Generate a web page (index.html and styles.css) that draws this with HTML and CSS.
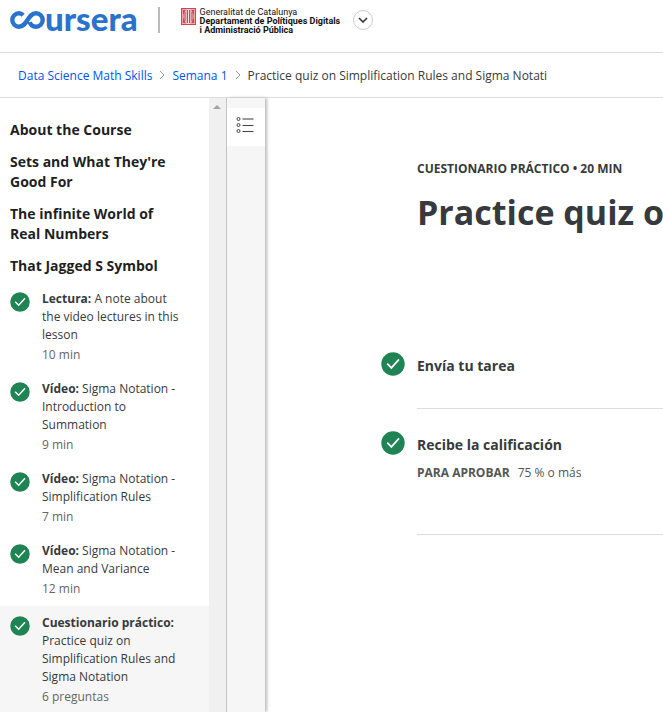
FILE: index.html
```html
<!DOCTYPE html>
<html lang="es">
<head>
<meta charset="utf-8">
<title>Practice quiz on Simplification Rules and Sigma Notation</title>
<link rel="stylesheet" href="styles.css">
</head>
<body>
<svg class="defs" aria-hidden="true">
  <symbol id="check" viewBox="0 0 24 24">
    <circle cx="12" cy="12" r="11.7" fill="#1f8354"/>
    <path d="M6.2 11.6l4.2 4.3 7.6-8.5" fill="none" stroke="#fff" stroke-width="1.7"/>
  </symbol>
  <symbol id="chevron" viewBox="0 0 6 10">
    <path d="M1 1l4 4-4 4" fill="none" stroke="#999" stroke-width="1"/>
  </symbol>
</svg>
<header class="topbar">
  <a class="brand" href="#" aria-label="coursera">
    <svg class="brand-mark" viewBox="0 0 35 20" aria-hidden="true">
      <path d="M13.200 5.200C12 4 10.600 3.300 9 3.300a6.700 6.700 0 0 0 0 13.400c8.500 0 8.500-13.400 17-13.400a6.700 6.700 0 0 1 0 13.400c-3.200 0-5.500-1.800-6.300-4.500" fill="none" stroke="#2a73cc" stroke-width="4.400"/>
    </svg>
    <span>ursera</span>
  </a>
  <div class="partner">
    <svg class="crest" viewBox="0 0 15 17" aria-hidden="true">
      <path fill="#d8434b" d="M0 0h15v17H0z"/>
      <path d="M1.500 1v15M13.500 1v15M1 1.500h13M1 15.500h13" stroke="#f0a8ac"/>
      <ellipse cx="7.500" cy="8.500" rx="5" ry="7.500" fill="#f8e4e2"/>
      <path d="M4 3.500v10M6.300 2v13M8.700 2v13M11 3.500v10" stroke="#b8343c" stroke-width="1.100"/>
    </svg>
    <div class="partner-name">Generalitat de Catalunya<br><b>Departament de Polítiques Digitals<br>i Administració Pública</b></div>
  </div>
  <button class="switch" aria-label="Cambiar programa">
    <svg viewBox="0 0 10 6" aria-hidden="true"><path d="M1 1l4 4 4-4" fill="none" stroke="#333" stroke-width="1.600"/></svg>
  </button>
</header>
<nav class="crumbs" aria-label="Ruta">
  <a href="#">Data Science Math Skills</a>
  <svg aria-hidden="true"><use href="#chevron"/></svg>
  <a href="#">Semana 1</a>
  <svg aria-hidden="true"><use href="#chevron"/></svg>
  <span>Practice quiz on Simplification Rules and Sigma Notati</span>
</nav>
<div class="layout">
  <aside class="sidebar">
    <div class="outline">
      <h2>About the Course</h2>
      <h2>Sets and What They're Good For</h2>
      <h2>The infinite World of Real Numbers</h2>
      <h2>That Jagged S Symbol</h2>
      <ul class="items">
        <li><svg aria-hidden="true"><use href="#check"/></svg><div><p><b>Lectura:</b> A note about the video lectures in this lesson</p><small>10 min</small></div></li>
        <li><svg aria-hidden="true"><use href="#check"/></svg><div><p><b>Vídeo:</b> Sigma Notation - Introduction to Summation</p><small>9 min</small></div></li>
        <li><svg aria-hidden="true"><use href="#check"/></svg><div><p><b>Vídeo:</b> Sigma Notation - Simplification Rules</p><small>7 min</small></div></li>
        <li><svg aria-hidden="true"><use href="#check"/></svg><div><p><b>Vídeo:</b> Sigma Notation - Mean and Variance</p><small>12 min</small></div></li>
        <li class="current"><svg aria-hidden="true"><use href="#check"/></svg><div><p><b>Cuestionario práctico:</b> Practice quiz on Simplification Rules and Sigma Notation</p><small>6 preguntas</small></div></li>
      </ul>
    </div>
    <div class="track"><svg viewBox="0 0 8 4" aria-hidden="true"><path d="M0 4l4-4 4 4z" fill="#a3a3a3"/></svg></div>
  </aside>
  <div class="rail">
    <button aria-label="Menú">
      <svg viewBox="0 0 18 18" aria-hidden="true"><g fill="none" stroke="#444"><circle cx="2.500" cy="3" r="1.500"/><circle cx="2.500" cy="9" r="1.500"/><circle cx="2.500" cy="15" r="1.500"/><path d="M6.500 3h11" stroke="#999" stroke-width="2"/><path d="M6.500 9.500h11M6.500 15.500h11"/></g></svg>
    </button>
  </div>
  <main>
    <p class="kind">CUESTIONARIO PRÁCTICO • 20 MIN</p>
    <h1>Practice quiz on Simplification Rules and Sigma Notation</h1>
    <section class="step">
      <svg aria-hidden="true"><use href="#check"/></svg>
      <div class="step-body"><h3>Envía tu tarea</h3></div>
    </section>
    <section class="step grade">
      <svg aria-hidden="true"><use href="#check"/></svg>
      <div class="step-body"><h3>Recibe la calificación</h3><p><b>PARA APROBAR</b><span>75 % o más</span></p></div>
    </section>
  </main>
</div>
</body>
</html>
```
FILE: styles.css
```css
* { box-sizing: border-box; }
body {
  margin: 0;
  height: 100vh;
  display: flex;
  flex-direction: column;
  overflow: hidden;
  background: #fff;
  color: #373a3c;
  font-family: "Open Sans", sans-serif;
  font-size: 12px;
}
h1, h2, h3, p, ul { margin: 0; padding: 0; }
a { color: #0056f0; text-decoration: none; }
button { padding: 0; background: #fff; }
.defs { display: none; }

.topbar {
  flex: none;
  display: flex;
  align-items: flex-start;
  height: 53px;
  padding: 7px 10px 0;
  border-bottom: 1px solid #ddd;
}
.brand {
  display: flex;
  align-items: center;
  height: 26px;
  padding-right: 20px;
  border-right: 2px solid #bbb;
  color: #2a73cc;
  font: 900 33px/22px Lato, sans-serif;
}
.brand span { padding-bottom: 4px; }
.brand-mark { width: 35px; height: 20px; }
.partner {
  display: flex;
  gap: 4px;
  margin-left: 21px;
  padding-top: 1px;
}
.crest { width: 15px; height: 17px; }
.partner-name {
  color: #111;
  font: 9px/9px Roboto, sans-serif;
  white-space: nowrap;
}
.switch {
  display: grid;
  place-items: center;
  width: 20px;
  height: 20px;
  margin: 3px 0 0 13px;
  border: 1px solid #ccc;
  border-radius: 50%;
}
.switch svg { width: 10px; height: 6px; }

.crumbs {
  flex: none;
  display: flex;
  align-items: center;
  gap: 7px;
  height: 45px;
  padding: 0 18px;
  border-bottom: 1px solid #ddd;
  white-space: nowrap;
}
.crumbs svg { width: 6px; height: 10px; }

.layout { flex: 1; min-height: 0; display: flex; }
.sidebar {
  flex: none;
  display: flex;
  width: 227px;
  border-right: 1px solid #c4c4c4;
  overflow: hidden;
}
.outline { flex: 1; padding-top: 22px; }
.outline h2 {
  padding: 0 30px 0 10px;
  margin-bottom: 12px;
  color: #1f1f1f;
  font-size: 14px;
  font-weight: 700;
  line-height: 20px;
}
.items { list-style: none; margin-top: -6px; }
.items li {
  display: flex;
  gap: 12px;
  padding: 8px 28px 8px 10px;
}
.items svg { flex: none; width: 20px; height: 20px; margin-top: 2px; }
.items p { line-height: 18px; }
.items b { font-weight: 700; }
.items small {
  display: block;
  margin-top: 2px;
  color: #666;
  font-size: 12px;
  line-height: 18px;
}
.items .current { background: #f6f6f6; }
.track {
  width: 17px;
  padding: 7px 4px;
  background: #f0f0f0;
}
.track svg { display: block; width: 8px; height: 4px; }

.rail {
  flex: none;
  width: 38px;
  padding-top: 10px;
  background: #f6f6f6;
  box-shadow: 2px 0 3px #bbb;
}
.rail button {
  display: flex;
  justify-content: center;
  width: 100%;
  height: 38px;
  padding: 8px 3px 0 0;
  border: 0;
}
.rail svg { width: 18px; height: 18px; }

main {
  flex: 1;
  min-width: 0;
  padding: 62px 0 0 116px;
  overflow: hidden;
}
.kind, h1 { margin-left: 36px; }
.kind { font-weight: 700; line-height: 18px; }
h1 {
  margin-top: 10px;
  margin-bottom: 116px;
  font-size: 34px;
  font-weight: 700;
  line-height: 48px;
  white-space: nowrap;
}
.step { display: flex; gap: 12px; margin-bottom: 22px; }
.step svg { flex: none; width: 24px; height: 24px; }
.step-body {
  flex: 1;
  height: 57px;
  border-bottom: 1px solid #ddd;
}
.grade .step-body { height: 104px; }
h3 { font-size: 14px; font-weight: 700; line-height: 28px; }
.step-body p {
  display: flex;
  gap: 8px;
  color: #555;
  line-height: 28px;
}
.step-body b { font-weight: 700; }
```
